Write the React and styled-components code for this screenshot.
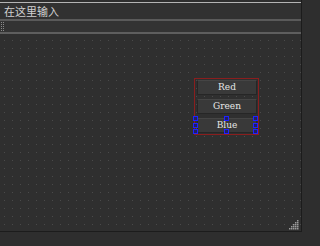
import React from "react";
import styled, { createGlobalStyle } from "styled-components";

const Global = createGlobalStyle`
  html, body { margin: 0; padding: 0; background: #2e2e2e; }
  body { width: 320px; height: 246px; overflow: hidden; font-family: "Noto Sans CJK SC", "DejaVu Sans", sans-serif; }
`;

const Window = styled.div`
  display: flex;
  width: 320px;
  height: 246px;
  background: #2e2e2e;
`;

const MainColumn = styled.div`
  display: flex;
  flex-direction: column;
  width: 301px;
  height: 229px;
  border-right: 1px solid #1c1c1c;
  border-bottom: 1px solid #1c1c1c;
  padding-top: 2px;
  box-sizing: content-box;
`;

const InputBar = styled.div`
  height: 16px;
  border-top: 1px solid #b4b4b4;
  background: #313131;
  color: #d0d0d0;
  font-size: 11px;
  line-height: 16px;
  padding-left: 4px;
  border-bottom: 2px solid #5a5a5a;
`;

const ToolBar = styled.div`
  display: flex;
  align-items: stretch;
  height: 9px;
  padding: 1px 0;
  background: #333333;
  border-bottom: 2px solid #5e5e5e;
`;

const Grip = styled.div`
  width: 3px;
  margin-left: 1px;
  background-image: radial-gradient(circle at 0.5px 0.5px, #8a8a8a 0.5px, transparent 0.6px);
  background-size: 2px 2px;
`;

const Canvas = styled.div`
  position: relative;
  flex: 1;
  background-color: #2f2f2f;
  background-image: radial-gradient(circle at 0.5px 0.5px, #4a4a4a 0.7px, transparent 0.8px);
  background-size: 8px 8px;
  background-position: 4px 6px;
`;

const Group = styled.div`
  position: absolute;
  left: 194px;
  top: 44px;
  width: 60px;
  display: flex;
  flex-direction: column;
  gap: 4px;
  padding: 1px 1px 1px 2px;
  border: 1px solid #8a1e1e;
`;

const Btn = styled.div`
  position: relative;
  height: 13px;
  background: #393939;
  border: 1px solid #262626;
  border-top-color: #454545;
  color: #e6e6e6;
  font-family: "DejaVu Serif", "Liberation Serif", serif;
  font-size: 9px;
  line-height: 13px;
  text-align: center;
`;

const Handle = styled.span`
  position: absolute;
  width: 3px;
  height: 3px;
  border: 1px solid #2020ff;
  background: #202060;
  left: ${(p) => p.$x};
  top: ${(p) => p.$y};
`;

const SizeGrip = styled.svg`
  position: absolute;
  right: 2px;
  bottom: 1px;
`;

const hx = ["-5px", "calc(50% - 3px)", "calc(100% - 3px)"];
const hy = ["-3px", "calc(50% - 3px)", "calc(100% - 3px)"];

export default function App() {
  const handles = [];
  hx.forEach((x, i) =>
    hy.forEach((y, j) => {
      if (i === 1 && j === 1) return;
      handles.push(<Handle key={`${i}-${j}`} $x={x} $y={y} />);
    })
  );
  return (
    <>
      <Global />
      <Window>
        <MainColumn>
          <InputBar>在这里输入</InputBar>
          <ToolBar>
            <Grip />
          </ToolBar>
          <Canvas>
            <Group>
              <Btn>Red</Btn>
              <Btn>Green</Btn>
              <Btn>Blue{handles}</Btn>
            </Group>
            <SizeGrip width="10" height="10" viewBox="0 0 10 10">
              {[
                [8, 0], [6, 2], [8, 2], [4, 4], [6, 4], [8, 4], [2, 6], [4, 6], [6, 6], [8, 6], [0, 8], [2, 8], [4, 8], [6, 8], [8, 8],
              ].map(([x, y]) => (
                <rect key={`${x}-${y}`} x={x} y={y} width="1.5" height="1.5" fill="#9a9a9a" />
              ))}
            </SizeGrip>
          </Canvas>
        </MainColumn>
      </Window>
    </>
  );
}
